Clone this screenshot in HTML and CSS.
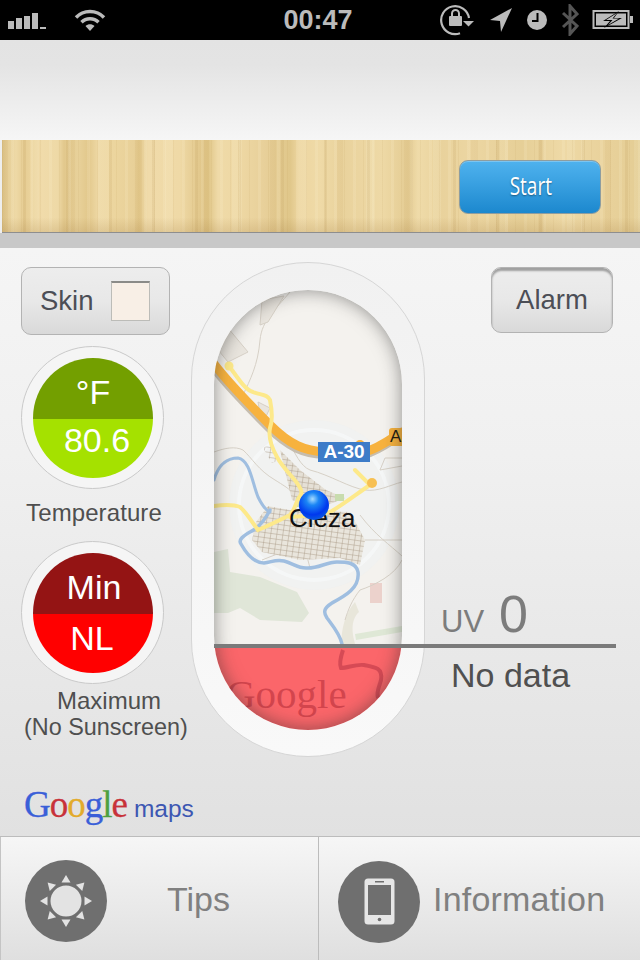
FILE: index.html
```html
<!DOCTYPE html>
<html lang="en">
<head>
<meta charset="utf-8">
<title>UV</title>
<link rel="stylesheet" href="styles.css">
</head>
<body>
<div class="screen">
  <header class="status">
    <div class="status-left">
      <svg width="40" height="20" viewBox="0 0 40 20"><g fill="#bbb"><rect x="0" y="11" width="6" height="8"/><rect x="8" y="8" width="6" height="11"/><rect x="16" y="6" width="6" height="13"/><rect x="24" y="3" width="6" height="16"/><rect x="32" y="17" width="6" height="2"/></g></svg>
      <svg class="ico-wifi" width="32" height="24" viewBox="0 0 32 24"><g fill="none" stroke="#bbb" stroke-width="3.4"><path d="M2 9.5C9.5 1.5 22.500 1.500 30 9.500"/><path d="M7.500 14.200C12 9.500 20 9.500 24.500 14.200"/></g><path d="M11.500 18C14 15.500 18 15.500 20.500 18L16 23Z" fill="#bbb"/></svg>
    </div>
    <div class="clock">00:47</div>
    <div class="status-right">
      <svg width="36" height="32" viewBox="0 0 36 32"><path d="M29 14A14 14 0 1 0 20 29.300" fill="none" stroke="#bbb" stroke-width="2.200"/><path d="M23 17H34L28.500 22.500Z" fill="#bbb"/><rect x="9" y="12" width="13" height="10" rx="1" fill="#bbb"/><path d="M12 12V9.500A3.500 3.500 0 0 1 19 9.500V12" fill="none" stroke="#bbb" stroke-width="2"/></svg>
      <svg width="24" height="26" viewBox="0 0 24 26"><path d="M23 1L1 13L11 14L12 25Z" fill="#bbb"/></svg>
      <svg width="22" height="22" viewBox="0 0 22 22"><circle cx="11" cy="11" r="10" fill="#bbb"/><path d="M11.500 4V12H6" fill="none" stroke="#000" stroke-width="2"/></svg>
      <svg width="18" height="32" viewBox="0 0 18 32"><path d="M2 9L16 22L9 30V2L16 10L2 23" fill="none" stroke="#555" stroke-width="3"/></svg>
      <svg width="42" height="22" viewBox="0 0 42 22"><rect x="1.500" y="2" width="35" height="17" fill="none" stroke="#bbb" stroke-width="2"/><rect x="4" y="4.500" width="30" height="12" fill="#bbb"/><rect x="38" y="7" width="3" height="7" fill="#bbb"/><path d="M27 2L11 12H18L12 19L30 9H22Z" fill="#000"/><path d="M25 4L14 11H20.500L16 16L27 9.500H20.500Z" fill="#bbb"/></svg>
    </div>
  </header>

  <div class="topband"></div>

  <section class="wood">
    <button class="start" type="button"><span class="start-label">Start</span></button>
  </section>
  <div class="strip"></div>

  <main class="main">
    <div class="col-left">
      <button class="btn skin" type="button"><span>Skin</span><i class="swatch"></i></button>
      <div class="dial">
        <div class="dial-face green">
          <div class="dial-top">°F</div>
          <div class="dial-bottom">80.6</div>
        </div>
      </div>
      <div class="caption cap-temp">Temperature</div>
      <div class="dial">
        <div class="dial-face red">
          <div class="dial-top">Min</div>
          <div class="dial-bottom">NL</div>
        </div>
      </div>
      <div class="caption cap-max"><div class="cap-line1">Maximum</div><div class="cap-line2">(No Sunscreen)</div></div>
      <div class="gmaps"><span class="gl"><b class="c-b">G</b><b class="c-r">o</b><b class="c-y">o</b><b class="c-b">g</b><b class="c-g">l</b><b class="c-r">e</b></span><span class="maps">maps</span></div>
    </div>

    <div class="capsule">
      <div class="capsule-window">
        <svg class="map" width="188" height="440" viewBox="214 290 188 440">
          <defs>
            <pattern id="streets" width="6" height="5" patternUnits="userSpaceOnUse" patternTransform="rotate(8)">
              <path d="M0 0H6M0 0V5" stroke="#a99a86" stroke-width=".9" fill="none"/>
            </pattern>
            <radialGradient id="pin" cx="45%" cy="30%" r="70%">
              <stop offset="0" stop-color="#a8dcff"/>
              <stop offset=".3" stop-color="#1b86f5"/>
              <stop offset=".75" stop-color="#0038ee"/>
              <stop offset="1" stop-color="#0a5ae0"/>
            </radialGradient>
          </defs>
          <rect x="214" y="290" width="188" height="440" fill="#f4f2ee"/>
          <path d="M214 552L228 549L230 572L260 577L297 592L309 613L302 622L260 620L240 608L228 613L214 613Z" fill="#e0e6d8"/>
          <path d="M355 634L402 626V632L356 640Z" fill="#dfe8d6"/>
          <rect x="370" y="583" width="12" height="20" fill="#ecd2cc"/>
          <path d="M342 646C340 630 346 612 355 602L359 612C350 620 352 635 356 646Z" fill="#e8e6da"/>
          <circle cx="314" cy="505" r="85" fill="#eef1f4" opacity=".5"/>
          <circle cx="314" cy="505" r="75" fill="none" stroke="#f6f7f9" stroke-width="4" opacity=".8"/>
          <g fill="none" stroke="#d6d0c6" stroke-width="1">
            <path d="M290 292C275 310 262 320 260 340C258 365 250 380 243 395"/>
            <path d="M262 300L284 296L268 322L260 325Z" fill="#e9e5de"/>
            <path d="M214 345L228 328L248 352L228 362Z" fill="#e9e5de"/>
            <path d="M214 368L268 428"/>
            <path d="M214 452C225 448 235 446 243 450C252 458 258 470 275 480C283 485 288 488 292 492"/>
            <path d="M402 482C390 485 378 492 365 490C350 488 330 475 310 470C300 466 295 452 290 445"/>
            <path d="M402 556C390 545 375 535 360 515M402 540H365"/>
            <path d="M402 560C395 575 375 585 360 590C352 600 348 610 345 620M262 560L300 545M300 530L310 568"/>
            <path d="M402 458H385L380 470L402 466"/>
            <path d="M258 402L270 408L262 425Z" fill="#e9e5de"/>
          </g>
          <path d="M256 522L268 506L290 510L350 512L365 540L360 565L340 558L300 560L262 552L252 540Z" fill="#e9e5dc"/>
          <path d="M256 522L268 506L290 510L350 512L365 540L360 565L340 558L300 560L262 552L252 540Z" fill="url(#streets)"/>
          <path d="M280 450L300 470L326 490L345 498L320 508L292 500Z" fill="#e5e0d6"/>
          <path d="M280 450L300 470L326 490L345 498L320 508L292 500Z" fill="url(#streets)"/>
          <path d="M263 448L271 444L280 460L272 463Z" fill="url(#streets)"/>
          <rect x="296" y="497" width="8" height="10" fill="#c8dcae"/>
          <rect x="335" y="494" width="9" height="7" fill="#c8dcae"/>
          <g fill="none" stroke="#9fbee0" stroke-linecap="round">
            <path d="M214 480C218 466 226 458 238 458C250 460 252 482 258 497C262 505 267 511 270 512" stroke-width="3"/>
            <path d="M270 510C265 520 258 528 250 532C243 536 238 540 241 544C246 553 253 563 264 563C272 562 276 559 284 561C292 563 298 568 306 568C318 569 326 562 337 562C346 562 356 562 358 572C360 588 345 596 332 603C324 608 323 612 327 618C333 626 340 634 342 644" stroke-width="3.500"/>
          </g>
          <g fill="none" stroke-linecap="round">
            <path d="M214 364C230 385 255 410 270 425C290 445 305 451 325 452H365C380 448 392 438 402 432" stroke="#c6bdae" stroke-width="10" transform="translate(-1 2)"/>
            <path d="M214 364C230 385 255 410 270 425C290 445 305 451 325 452H365C380 448 392 438 402 432" stroke="#f7b23e" stroke-width="9"/>
            <path d="M229 366C238 378 245 390 253 392C260 395 268 394 270 400C272 410 273 420 270 428C268 438 272 448 277 457C283 468 292 476 297 483C301 489 303 492 300 496C296 501 295 510 290 515C280 520 268 526 258 530C252 522 246 512 240 507C232 504 222 505 214 506" stroke="#fde98a" stroke-width="4"/>
            <path d="M290 517C305 516 320 516 332 511C345 503 358 493 370 485L355 470" stroke="#fde98a" stroke-width="4"/>
            <circle cx="229" cy="366" r="4.500" fill="#fde98a" stroke="none"/>
            <circle cx="372" cy="483" r="5" fill="#f7c053" stroke="none"/>
            <circle cx="360" cy="445" r="5" fill="#f7b23e" stroke="none"/>
          </g>
          <rect x="318" y="442" width="52" height="20" fill="#3d7cc8"/>
          <text class="shield" x="344" y="458">A-30</text>
          <rect x="389" y="428" width="16" height="18" rx="3" fill="#f7b23e"/>
          <text class="shield-dark" x="390" y="442">A</text>
          <text class="town" x="289" y="527">Cieza</text>
          <circle cx="314" cy="505" r="15" fill="url(#pin)"/>
          <rect class="uvfill" x="214" y="648" width="188" height="82"/>
          <path class="uvriver" d="M343 650C341 656 339 664 341 668C348 668 355 664 364 665C375 667 383 668 381 680C379 688 376 692 378 698"/>
          <text class="gtext" x="226" y="708">Google</text>
        </svg>
        <div class="window-shade"></div>
      </div>
    </div>

    <div class="col-right">
      <button class="btn alarm" type="button">Alarm</button>
      <div class="uv-row"><span class="uv-label">UV</span><span class="uv-value">0</span></div>
      <div class="uv-note">No data</div>
    </div>
    <div class="uv-rule"></div>
  </main>

  <nav class="tabs">
    <a class="tab tab-tips">
      <svg class="tab-ico" width="82" height="82" viewBox="0 0 82 82">
        <circle cx="41" cy="41" r="41" fill="#6f6f6f"/>
        <circle cx="41" cy="41" r="15.500" fill="#e3e3e3"/>
        <g fill="#e3e3e3">
          <path d="M41 15L45.500 22.500H36.500Z"/>
          <path d="M41 15L45.500 22.500H36.500Z" transform="rotate(45 41 41)"/>
          <path d="M41 15L45.500 22.500H36.500Z" transform="rotate(90 41 41)"/>
          <path d="M41 15L45.500 22.500H36.500Z" transform="rotate(135 41 41)"/>
          <path d="M41 15L45.500 22.500H36.500Z" transform="rotate(180 41 41)"/>
          <path d="M41 15L45.500 22.500H36.500Z" transform="rotate(225 41 41)"/>
          <path d="M41 15L45.500 22.500H36.500Z" transform="rotate(270 41 41)"/>
          <path d="M41 15L45.500 22.500H36.500Z" transform="rotate(315 41 41)"/>
        </g>
      </svg>
      <span class="tab-label tips-label">Tips</span>
    </a>
    <a class="tab tab-info">
      <svg class="tab-ico" width="82" height="82" viewBox="0 0 82 82">
        <circle cx="41" cy="41" r="41" fill="#6f6f6f"/>
        <rect x="26.500" y="17.500" width="30" height="46" rx="3.500" fill="#e6e6e6"/>
        <rect x="30" y="24" width="23" height="30" fill="#6f6f6f"/>
        <rect x="37" y="20" width="9" height="1.500" fill="#6f6f6f"/>
        <circle cx="41.500" cy="58.500" r="1.800" fill="#6f6f6f"/>
      </svg>
      <span class="tab-label info-label">Information</span>
    </a>
  </nav>
</div>
</body>
</html>
```
FILE: styles.css
```css
* { box-sizing: border-box; }
html, body { margin: 0; padding: 0; }
body { font-family: "Liberation Sans", Arial, sans-serif; background: #eee; }
.screen { width: 640px; height: 960px; overflow: hidden; display: flex; flex-direction: column; }

.status { height: 40px; background: #000; display: flex; align-items: center; justify-content: space-between; color: #bbb; flex: none; }
.status-left { display: flex; align-items: center; padding-left: 8px; gap: 26px; width: 198px; }
.clock { font-weight: bold; font-size: 27px; line-height: 40px; width: 70px; text-align: center; }
.status-right { width: 202px; display: flex; align-items: center; justify-content: flex-end; padding-right: 6px; gap: 13px; }

.topband { height: 100px; flex: none; background: linear-gradient(#e3e3e3, #e4e4e4 25%, #f6f6f6); }

.wood {
  height: 93px; flex: none; margin-left: 2px; border-bottom: 1px solid #8e8e8e;
  display: flex; justify-content: flex-end; align-items: flex-start; padding: 20px 39px 0 0;
  background:
    linear-gradient(rgba(150,110,50,0) 84%, rgba(150,110,50,.18)),
    repeating-linear-gradient(90deg, rgba(165,125,55,.07) 0 1px, rgba(255,255,255,0) 1px 9px, rgba(255,245,215,.14) 9px 12px, rgba(255,255,255,0) 12px 19px),
    repeating-linear-gradient(90deg, rgba(165,125,55,0) 0 21px, rgba(165,125,55,.11) 21px 24px, rgba(255,255,255,0) 24px 43px),
    repeating-linear-gradient(90deg, rgba(190,150,80,.09) 0 6px, rgba(255,255,255,0) 6px 29px, rgba(255,250,225,.12) 29px 37px, rgba(255,255,255,0) 37px 67px),
    linear-gradient(90deg, #dcc287 0, #e6cf98 6px, #eed9a6 14px, #e6cd93 22px, #ecd59f 32px, #f0dbaa 40px, #eed9a6 56px, #e2c88c 62px, #e8d19a 76px, #e2c88c 86px, #eed8a4 96px, #ecd59e 112px, #e8d098 132px, #e2c88b 137px, #f0dbaa 146px, #efd9a6 178px, #e2c88c 198px, #dfc586 206px, #efdaa8 216px, #eed8a4 236px, #e8d09a 262px, #e0c78a 288px, #edd6a1 297px, #efdaa7 318px, #e9d29c 340px, #eed9a6 380px, #e4cc93 406px, #efdba9 416px, #e9d29c 440px, #ecd6a2 470px, #e6cf97 520px, #eed9a6 560px, #e9d29c 600px, #e4cd94 638px);
}
.start {
  width: 142px; height: 54px; padding: 0 0 4px 2px; border: 1px solid #8e9d9f; border-radius: 9px; color: #fff;
  background: linear-gradient(#4fb2ee, #3ba2e2 40%, #1c88ce);
  box-shadow: inset 0 1px 0 rgba(255,255,255,.25);
  font-family: "Open Sans", sans-serif; font-size: 25px; line-height: 46px;
}
.start-label { display: inline-block; transform: scaleX(.76); text-shadow: 0 1px 2px rgba(0,0,0,.4); }

.strip { height: 15px; flex: none; background: #c8c8c8; }

.main { height: 588px; flex: none; position: relative; display: grid; grid-template-columns: 191px 234px 1fr; align-items: start; background: linear-gradient(#f5f5f5, #f0f0f0 35%, #e1e1e1); }

.col-left { padding: 19px 0 0 21px; }
.btn { font-family: "Liberation Sans", Arial, sans-serif; font-size: 27.500px; color: #4c4e56; border: 1px solid #b3b3b3; background: linear-gradient(#ededed, #e8e8e8 50%, #d9d9d9); }
.skin { width: 149px; height: 68px; border-radius: 10px; display: flex; align-items: center; padding: 0 19px 0 18px; justify-content: space-between; margin-bottom: 11px; }
.swatch { display: block; width: 39px; height: 40px; background: #f8efe6; border: 1px solid #bcbcb8; border-top: 2px solid #8b8b88; }
.alarm { width: 122px; height: 66px; border-radius: 10px; margin: 19px 0 0 66px; box-shadow: inset 0 3px 2px #a0a0a0; padding: 0; line-height: 64px; display: block; }

.dial { width: 143px; height: 143px; border-radius: 50%; border: 1px solid #cacaca; background: #f5f5f5; padding: 11px; }
.dial-face { width: 120px; height: 120px; border-radius: 50%; overflow: hidden; color: #fff; font-size: 34px; text-align: center; display: flex; flex-direction: column; }
.dial-top { height: 61px; line-height: 68px; }
.dial-bottom { flex: 1; line-height: 42px; }
.green .dial-top { background: #739f00; }
.green .dial-bottom { background: #a5e100; padding-left: 8px; }
.red .dial-top { background: #941414; padding-left: 2px; }
.red .dial-bottom { background: #ff0000; line-height: 49px; padding-right: 2px; }

.caption { color: #4f4f4f; font-size: 24px; text-align: center; }
.cap-temp { width: 146px; line-height: 28px; margin: 10px 0 14px; letter-spacing: .1px; }
.cap-max { line-height: 27px; margin-top: 3px; text-align: left; white-space: nowrap; }
.cap-line1 { padding-left: 36px; }
.cap-line2 { padding-left: 3px; font-size: 23.400px; }

.gmaps { margin: 46px 0 0 3px; display: flex; align-items: baseline; gap: 7px; height: 36px; white-space: nowrap; }
.gl { font-family: "Liberation Serif", serif; font-size: 37px; line-height: 36px; letter-spacing: -1px; -webkit-text-stroke: .3px currentColor; }
.gl b { font-weight: normal; }
.c-b { color: #3a5fd8; }
.c-r { color: #c8323a; }
.c-y { color: #e2ab2c; }
.c-g { color: #4ea13f; }
.maps { color: #3d57b2; font-size: 24.500px; }

.capsule { width: 234px; height: 495px; margin-top: 14px; border-radius: 117px; border: 1px solid #d6d6d6; background: linear-gradient(#f1f1f1, #f9f9f9); padding: 27px 22px; }
.capsule-window { width: 188px; height: 440px; border-radius: 94px; overflow: hidden; position: relative; }
.map { display: block; }
.window-shade { position: absolute; inset: 0; border-radius: 94px; box-shadow: inset 0 0 18px rgba(40,40,40,.5); }
.shield { font: bold 19px "Liberation Sans", sans-serif; fill: #fff; text-anchor: middle; }
.shield-dark { font: 17px "Liberation Sans", sans-serif; fill: #221a10; }
.town { font: 26px "Liberation Sans", sans-serif; fill: #111; }
.gtext { font: 41px "Liberation Serif", serif; fill: #b82f3a; fill-opacity: .6; }
.uvfill { fill: #ff1a24; fill-opacity: .65; }
.uvriver { fill: none; stroke: #c9414f; stroke-width: 4; stroke-opacity: .75; }

.col-right { display: flex; flex-direction: column; }
.uv-row { margin: 251px 0 0 16px; height: 60px; display: flex; align-items: baseline; gap: 15px; color: #7c7c7c; }
.uv-label { font-size: 31px; line-height: 60px; }
.uv-value { font-size: 52px; line-height: 60px; }
.uv-note { margin: 6px 0 0 26px; font-size: 34px; line-height: 50px; color: #505050; }
.uv-rule { position: absolute; left: 214px; top: 396px; width: 402px; height: 4px; background: #7a7a7a; }

.tabs { flex: 1; display: flex; background: linear-gradient(#f6f6f6, #dfdfdf); border-top: 1px solid #bcbcbc; }
.tab { display: flex; align-items: center; color: #808080; font-size: 34px; }
.tab-tips { width: 319px; padding: 4px 0 0 24px; border-left: 1px solid #c4c4c4; border-right: 1px solid #bcbcbc; }
.tab-info { flex: 1; padding: 6px 0 0 19px; }
.tab-ico { flex: none; }
.tab-label { margin-bottom: 2px; }
.tips-label { margin-left: 60px; }
.info-label { margin-left: 13px; letter-spacing: .2px; margin-bottom: 4px; }
```
